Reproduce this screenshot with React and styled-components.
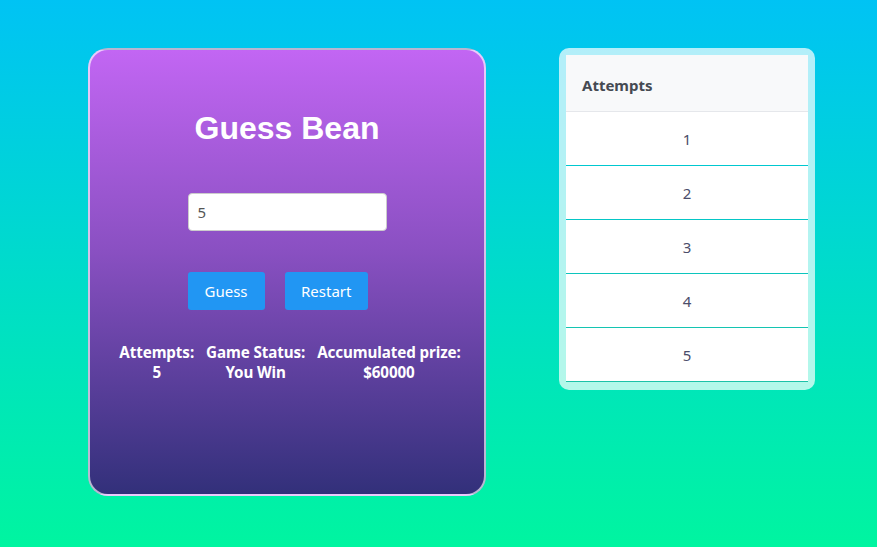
import React, { useState } from 'react';
import styled, { createGlobalStyle } from 'styled-components';

const GlobalStyle = createGlobalStyle`
  html, body {
    margin: 0;
    padding: 0;
  }
  body {
    font-family: "Noto Sans", "Open Sans", sans-serif;
    background: linear-gradient(to bottom, #00c3f4 0%, #00f5a0 100%);
    min-height: 547px;
  }
`;

const Page = styled.div`
  display: flex;
  align-items: flex-start;
  gap: 73px;
  padding: 48px 0 0 88px;
  min-height: 547px;
  box-sizing: border-box;
`;

const GameCard = styled.div`
  width: 398px;
  height: 448px;
  box-sizing: border-box;
  border: 2px solid rgba(255, 255, 255, 0.65);
  border-radius: 20px;
  background: linear-gradient(to bottom, #c266f3 0%, #8a50c2 45%, #32307a 100%);
  display: flex;
  flex-direction: column;
  align-items: center;
  padding-top: 58px;
  color: #fff;
`;

const Title = styled.h1`
  margin: 0;
  font-family: "Liberation Sans", Arial, sans-serif;
  font-size: 32px;
  font-weight: 700;
  line-height: 40px;
`;

const Controls = styled.div`
  width: 199px;
  margin-top: 45px;
  display: flex;
  flex-direction: column;
  align-items: flex-start;
`;

const GuessInput = styled.input`
  width: 199px;
  height: 38px;
  box-sizing: border-box;
  border: 1px solid #ccc;
  border-radius: 4px;
  padding: 0 9px;
  font-family: "Noto Sans", sans-serif;
  font-size: 15px;
  color: #555;
  outline: none;
`;

const ButtonRow = styled.div`
  display: flex;
  gap: 20px;
  margin-top: 41px;
`;

const Button = styled.button`
  height: 38px;
  padding: 0 ${p => p.$pad}px;
  border: none;
  border-radius: 3px;
  background: #2196f3;
  color: #fff;
  font-family: "Noto Sans", sans-serif;
  font-size: 15px;
  cursor: pointer;
`;

const Stats = styled.div`
  display: flex;
  justify-content: center;
  gap: 12px;
  margin-top: 32px;
  padding-left: 6px;
  box-sizing: border-box;
  width: 100%;
`;

const Stat = styled.div`
  text-align: center;
  font-size: 15.2px;
  font-weight: 700;
  line-height: 20px;
  letter-spacing: -0.1px;
`;

const TablePanel = styled.div`
  width: 256px;
  box-sizing: border-box;
  padding: 7px 7px 8px;
  border-radius: 10px;
  background: rgba(255, 255, 255, 0.7);
`;

const Table = styled.table`
  width: 100%;
  border-collapse: collapse;
  background: #fff;
`;

const HeadCell = styled.th`
  height: 56px;
  padding: 4px 16px 0;
  box-sizing: border-box;
  text-align: left;
  background: #f8f9fa;
  border-bottom: 1px solid #e5e7eb;
  color: #454a52;
  font-size: 15px;
  font-weight: 700;
`;

const Cell = styled.td`
  height: 51px;
  padding: 2px 0 0;
  text-align: center;
  color: #4b4d6a;
  font-size: 15px;
  border-bottom: 1px solid ${p => p.$line};
`;

const lineColors = ['#00c8d0', '#05c6c6', '#0cc5bd', '#14c4b2', '#1cc2a8'];

export default function App() {
  const [value, setValue] = useState('5');
  const attempts = [1, 2, 3, 4, 5];

  return (
    <>
      <GlobalStyle />
      <Page>
        <GameCard>
          <Title>Guess Bean</Title>
          <Controls>
            <GuessInput value={value} onChange={e => setValue(e.target.value)} />
            <ButtonRow>
              <Button $pad={17}>Guess</Button>
              <Button $pad={16.5}>Restart</Button>
            </ButtonRow>
          </Controls>
          <Stats>
            <Stat>Attempts:<br />5</Stat>
            <Stat>Game Status:<br />You Win</Stat>
            <Stat>Accumulated prize:<br />$60000</Stat>
          </Stats>
        </GameCard>

        <TablePanel>
          <Table>
            <thead>
              <tr><HeadCell>Attempts</HeadCell></tr>
            </thead>
            <tbody>
              {attempts.map((n, i) => (
                <tr key={n}><Cell $line={lineColors[i]}>{n}</Cell></tr>
              ))}
            </tbody>
          </Table>
        </TablePanel>
      </Page>
    </>
  );
}
